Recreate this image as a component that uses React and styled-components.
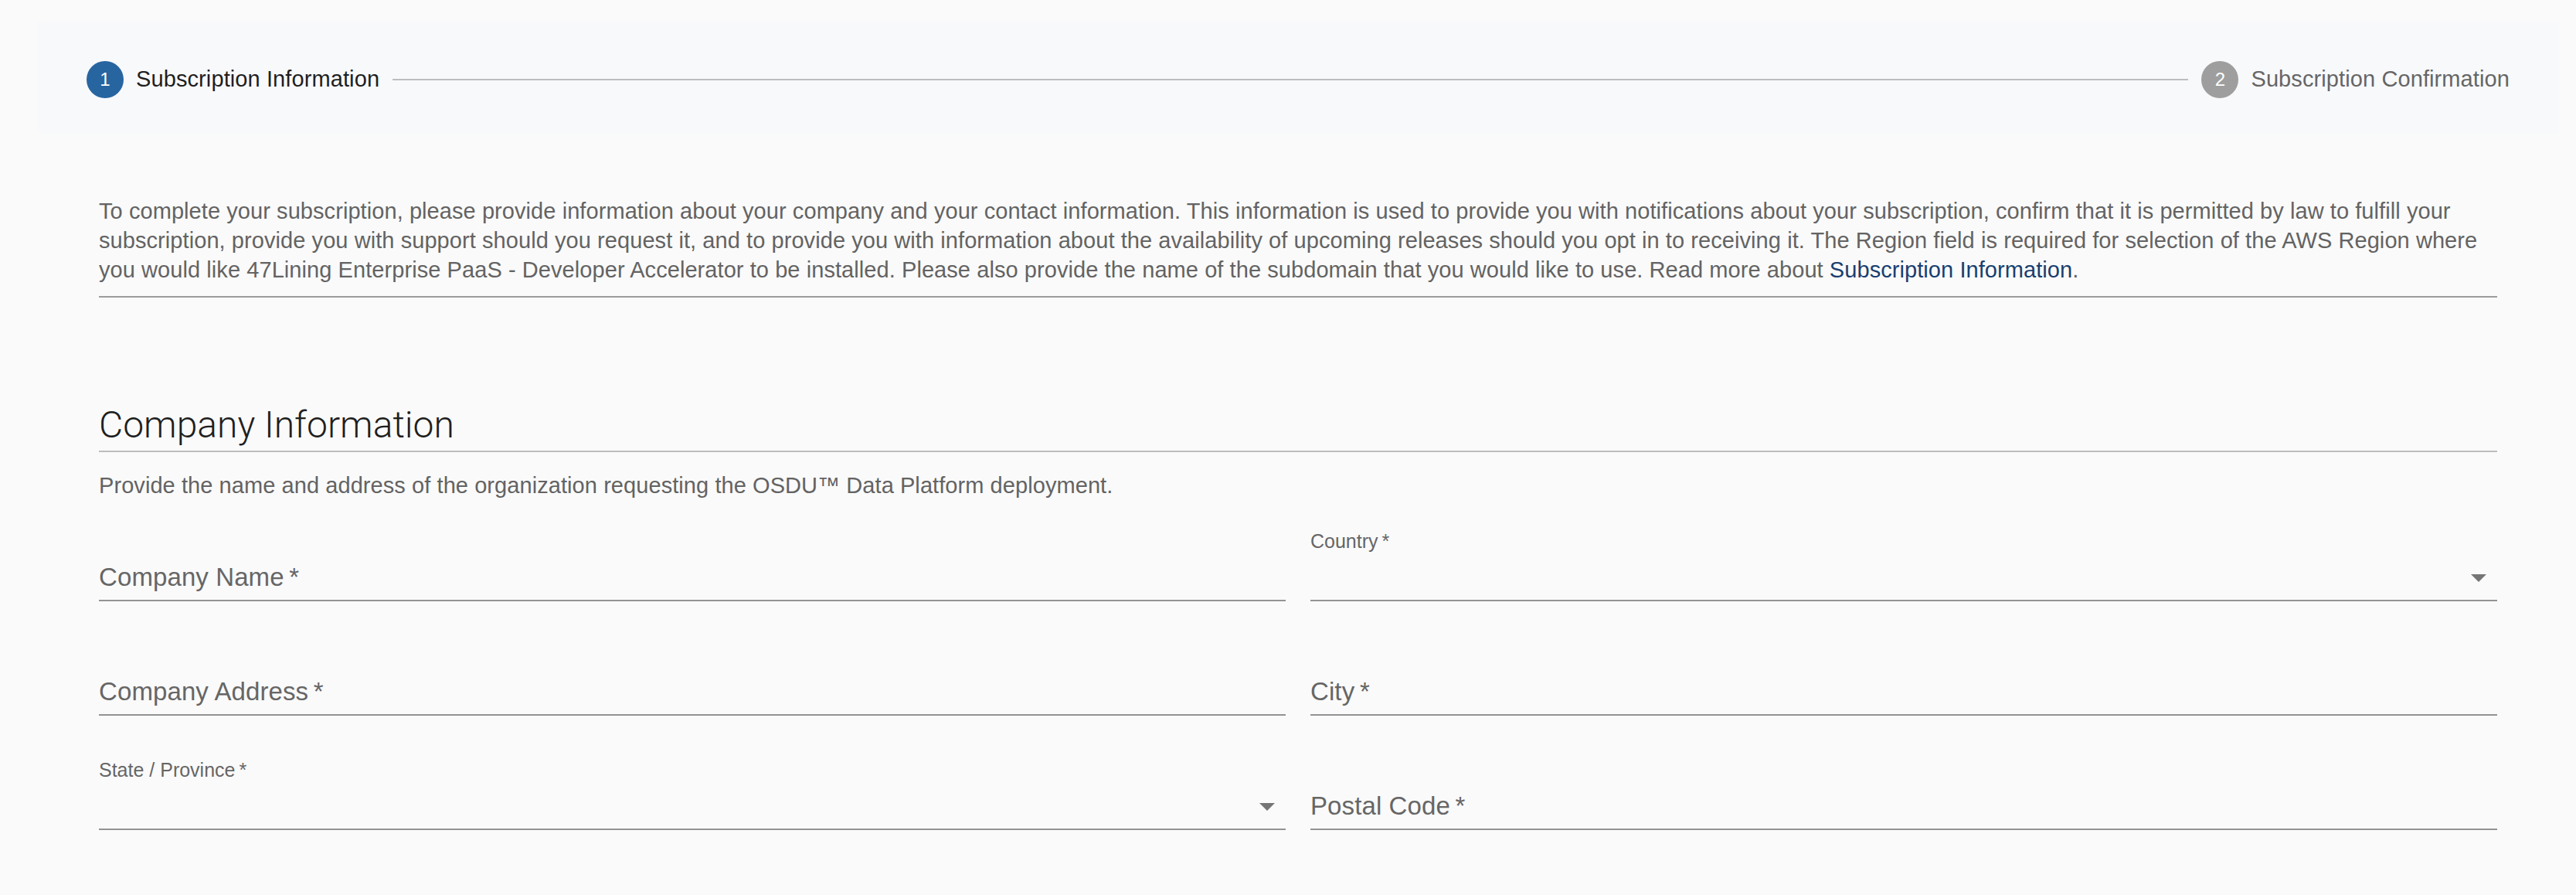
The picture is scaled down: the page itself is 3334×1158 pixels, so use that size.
import React from 'react'
import styled, { createGlobalStyle } from 'styled-components'

const GlobalStyle = createGlobalStyle`
  html, body {
    margin: 0;
    padding: 0;
    background: #fafafa;
  }
  body {
    font-family: "Liberation Sans", Arial, Helvetica, sans-serif;
    color: #636363;
  }
`

const Page = styled.div`
  width: 3334px;
  padding-top: 29px;
  padding-bottom: 80px;
`

const StepperBar = styled.div`
  margin-left: 48px;
  width: 3264px;
  height: 145px;
  box-sizing: border-box;
  padding: 2px 64px 0;
  background: #f8f9fb;
  display: flex;
  align-items: center;
`

const Step = styled.div`
  display: flex;
  align-items: center;
  gap: 16px;
`

const StepCircle = styled.span`
  width: 48px;
  height: 48px;
  border-radius: 50%;
  background: ${(p) => (p.active ? '#2765a1' : '#9e9e9e')};
  color: #fff;
  font-size: 24px;
  display: flex;
  align-items: center;
  justify-content: center;
`

const StepLabel = styled.span`
  font-size: 29px;
  letter-spacing: 0.1px;
  color: ${(p) => (p.active ? '#1f1f1f' : '#666')};
`

const Connector = styled.div`
  flex: 1;
  margin: 0 17px;
  border-top: 2px solid #bdbdbd;
`

const Content = styled.div`
  margin-left: 128px;
  width: 3104px;
`

const Intro = styled.p`
  margin: 80px 0 0;
  padding-bottom: 15px;
  border-bottom: 2px solid #9c9c9c;
  font-size: 29px;
  letter-spacing: 0.07px;
  line-height: 38px;
  color: #636363;
`

const Link = styled.a`
  color: #183f70;
  text-decoration: none;
`

const SectionTitle = styled.h2`
  margin: 136px 0 0;
  padding-bottom: 4px;
  border-bottom: 2px solid #bdbdbd;
  font-family: Roboto, "Liberation Sans", sans-serif;
  font-weight: 300;
  font-size: 48px;
  line-height: 58px;
  color: #1f1f1f;
`

const SectionText = styled.p`
  margin: 24px 0 0;
  font-size: 29px;
  letter-spacing: 0.07px;
  line-height: 38px;
  color: #636363;
`

const FieldGrid = styled.div`
  margin-top: 41px;
  display: grid;
  grid-template-columns: 1fr 1fr;
  column-gap: 32px;
  row-gap: 58px;
`

const Field = styled.div`
  height: 88px;
  border-bottom: 2px solid #939393;
  display: flex;
  flex-direction: column;
`

const SmallLabel = styled.div`
  height: 24px;
  font-size: 25px;
  line-height: 24px;
  margin-top: 0;
  color: #666;
`

const InputRow = styled.div`
  margin-top: auto;
  height: 42px;
  margin-bottom: 8px;
  display: flex;
  align-items: center;
  justify-content: space-between;
`

const Placeholder = styled.span`
  font-size: 33px;
  line-height: 42px;
  letter-spacing: 0.1px;
  color: #666;
`

const Arrow = () => (
  <svg width="48" height="48" viewBox="0 0 24 24">
    <path d="M7 10l5 5 5-5z" fill="#757575" />
  </svg>
)

const TextField = ({ label }) => (
  <Field>
    <InputRow>
      <Placeholder>{label}{'\u2009*'}</Placeholder>
    </InputRow>
  </Field>
)

const SelectField = ({ label }) => (
  <Field>
    <SmallLabel>{label}{'\u2009*'}</SmallLabel>
    <InputRow>
      <span />
      <Arrow />
    </InputRow>
  </Field>
)

export default function App() {
  return (
    <Page>
      <GlobalStyle />
      <StepperBar>
        <Step>
          <StepCircle active>1</StepCircle>
          <StepLabel active>Subscription Information</StepLabel>
        </Step>
        <Connector />
        <Step>
          <StepCircle>2</StepCircle>
          <StepLabel>Subscription Confirmation</StepLabel>
        </Step>
      </StepperBar>
      <Content>
        <Intro>
          To complete your subscription, please provide information about your company and
          your contact information. This information is used to provide you with
          notifications about your subscription, confirm that it is permitted by law to
          fulfill your subscription, provide you with support should you request it, and to
          provide you with information about the availability of upcoming releases should
          you opt in to receiving it. The Region field is required for selection of the AWS
          Region where you would like 47Lining Enterprise PaaS - Developer Accelerator to be
          installed. Please also provide the name of the subdomain that you would like to
          use. Read more about <Link href="#">Subscription Information</Link>.
        </Intro>
        <SectionTitle>Company Information</SectionTitle>
        <SectionText>
          Provide the name and address of the organization requesting the OSDU™ Data
          Platform deployment.
        </SectionText>
        <FieldGrid>
          <TextField label="Company Name" />
          <SelectField label="Country" />
          <TextField label="Company Address" />
          <TextField label="City" />
          <SelectField label="State / Province" />
          <TextField label="Postal Code" />
        </FieldGrid>
      </Content>
    </Page>
  )
}
